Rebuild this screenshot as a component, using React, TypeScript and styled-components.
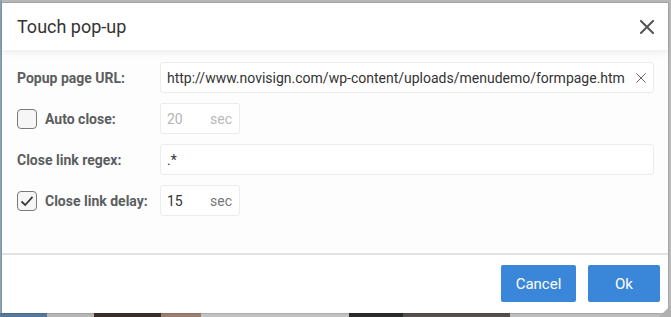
import React from "react";
import styled, { createGlobalStyle } from "styled-components";

// ------- global page styles -------
const GlobalStyle = createGlobalStyle`
  html, body {
    margin: 0;
    padding: 0;
    height: 100%;
    overflow: hidden;
  }
  body {
    font-family: Roboto, "Liberation Sans", Arial, sans-serif;
  }
  #root {
    height: 100%;
  }
`;

type Field = {
  label: string;
  value: string;
  checkbox?: boolean;
  checked?: boolean;
  short?: boolean;
  disabled?: boolean;
  clearable?: boolean;
};

const fields: Field[] = [
  {
    label: "Popup page URL:",
    value: "http://www.novisign.com/wp-content/uploads/menudemo/formpage.htm",
    clearable: true,
  },
  { label: "Auto close:", value: "20", checkbox: true, short: true, disabled: true },
  { label: "Close link regex:", value: ".*" },
  { label: "Close link delay:", value: "15", checkbox: true, checked: true, short: true },
];

const CloseIcon = ({ size, weight }: { size: number; weight: number }) => (
  <svg width={size} height={size} viewBox="0 0 14 14" fill="none">
    <path
      d="M1 1L13 13M13 1L1 13"
      stroke="currentColor"
      strokeWidth={weight}
      strokeLinecap="square"
    />
  </svg>
);

function App() {
  return (
    <Backdrop>
      <GlobalStyle />
      <Dialog>
        <Header>
          <Title>Touch pop-up</Title>
          <HeaderClose aria-label="Close">
            <CloseIcon size={14} weight={2} />
          </HeaderClose>
        </Header>

        {/* ----- form rows ----- */}
        <Body>
          {fields.map((f) => (
            <Row key={f.label}>
              <LabelCell>
                {f.checkbox ? (
                  <Check $checked={!!f.checked}>
                    {f.checked ? (
                      <svg width="14" height="12" viewBox="0 0 14 12" fill="none">
                        <path
                          d="M1.5 6.5L5.2 10L12.5 1.8"
                          stroke="#3a3a3a"
                          strokeWidth="1.8"
                        />
                      </svg>
                    ) : null}
                  </Check>
                ) : null}
                <Label>{f.label}</Label>
              </LabelCell>
              <InputBox $short={!!f.short}>
                <Value $disabled={!!f.disabled}>{f.value}</Value>
                {f.short ? <Unit $disabled={!!f.disabled}>sec</Unit> : null}
                {f.clearable ? (
                  <ClearBtn aria-label="Clear">
                    <CloseIcon size={10} weight={1.3} />
                  </ClearBtn>
                ) : null}
              </InputBox>
            </Row>
          ))}
        </Body>

        <Footer>
          <Btn>Cancel</Btn>
          <Btn $wide>Ok</Btn>
        </Footer>
        <Grip />
      </Dialog>
    </Backdrop>
  );
}

export default App;

// ------- component styles -------
const Backdrop = styled.div`
  height: 100%;
  box-sizing: border-box;
  padding: 3px 3px 4px 2px;
  background:
    linear-gradient(
        90deg,
        #56789a 0 7%,
        #b5b5b5 7% 14%,
        #3b2f29 14% 24%,
        #9a8070 24% 30%,
        #c2c2c2 30% 52%,
        #2b2b2b 52% 60%,
        #55504d 60% 76%,
        #bdbdbd 76% 100%
      )
      bottom / 100% 4px no-repeat,
    linear-gradient(90deg, #8ea3b8 0 2px, transparent 2px),
    #b9b9b9;
  display: flex;
  flex-direction: column;
`;

const Dialog = styled.section`
  position: relative;
  flex: 1;
  background: #ffffff;
  display: flex;
  flex-direction: column;
  box-shadow: 0 0 0 1px rgba(0, 0, 0, 0.1);
`;

const Header = styled.header`
  height: 47px;
  flex-shrink: 0;
  display: flex;
  align-items: center;
  justify-content: space-between;
  padding: 0 14px 0 15px;
  background: #ffffff;
  position: relative;
  z-index: 1;
  box-shadow: 0 2px 8px rgba(0, 0, 0, 0.08);
`;

const Title = styled.h2`
  margin: 0;
  font-size: 18px;
  font-weight: 400;
  color: #333333;
  padding-bottom: 1px;
`;

const HeaderClose = styled.button`
  border: none;
  background: transparent;
  padding: 0;
  color: #555555;
  display: flex;
  cursor: pointer;
`;

const Body = styled.div`
  flex: 1;
  padding: 12px 14px 0 15px;
  background: #fdfdfd;
  display: flex;
  flex-direction: column;
  gap: 10px;
`;

const Row = styled.div`
  display: flex;
  align-items: center;
`;

const LabelCell = styled.div`
  width: 143px;
  flex-shrink: 0;
  display: flex;
  align-items: center;
  gap: 8px;
`;

const Label = styled.span`
  font-size: 14px;
  font-weight: 700;
  color: #5b5d60;
`;

const Check = styled.span<{ $checked: boolean }>`
  width: 18px;
  height: 18px;
  border: 1.5px solid #7a7a7a;
  border-radius: 4px;
  background: #f6f6f6;
  display: flex;
  align-items: center;
  justify-content: center;
`;

const InputBox = styled.div<{ $short: boolean }>`
  box-sizing: border-box;
  height: 31px;
  width: ${(p) => (p.$short ? "80px" : "auto")};
  flex: ${(p) => (p.$short ? "0 0 auto" : "1")};
  border: 1px solid #ececec;
  border-radius: 3px;
  background: #ffffff;
  display: flex;
  align-items: center;
  padding: 0 7px 0 6px;
`;

const Value = styled.span<{ $disabled: boolean }>`
  flex: 1;
  font-size: 14px;
  color: ${(p) => (p.$disabled ? "#b4b4b4" : "#333333")};
  white-space: nowrap;
  overflow: hidden;
`;

const Unit = styled.span<{ $disabled: boolean }>`
  font-size: 14px;
  color: ${(p) => (p.$disabled ? "#b8b8b8" : "#777777")};
`;

const ClearBtn = styled.button`
  border: none;
  background: transparent;
  padding: 0;
  color: #555555;
  display: flex;
  margin-left: 8px;
`;

const Footer = styled.footer`
  flex-shrink: 0;
  border-top: 2px solid #e3e3e3;
  padding: 10px 8px 11px;
  display: flex;
  justify-content: flex-end;
  gap: 12px;
  background: #ffffff;
`;

const Btn = styled.button<{ $wide?: boolean }>`
  height: 37px;
  width: ${(p) => (p.$wide ? "72px" : "75px")};
  border: none;
  border-radius: 2px;
  background: #3a87d9;
  color: #ffffff;
  font-family: Roboto, "Liberation Sans", Arial, sans-serif;
  font-size: 15px;
  cursor: pointer;
`;

const Grip = styled.span`
  position: absolute;
  right: -3px;
  bottom: -4px;
  width: 0;
  height: 0;
  border-left: 12px solid transparent;
  border-bottom: 12px solid #b0b0b0;
`;
